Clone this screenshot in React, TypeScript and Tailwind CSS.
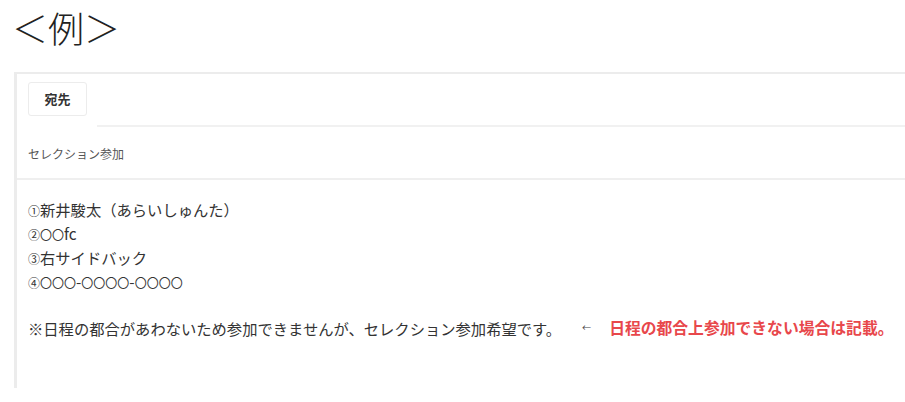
export default function App() {
  return (
    <div className="w-[905px] h-[402px] bg-white overflow-hidden text-[#333] font-['Noto_Sans_CJK_JP',sans-serif]">
      <h1 className="pl-[12px] pt-[7px] text-[36px] leading-[40px] font-light text-[#222]">＜例＞</h1>

      <div className="mt-[25px] ml-[14px] h-[316px] border-l-[3px] border-t-2 border-[#ececec]">
        <div className="flex pl-[11px] pt-[8px]">
          <div className="w-[59px] h-[34px] flex items-center justify-center rounded-[3px] border border-[#ececec] text-[13px] font-bold text-[#333]">
            宛先
          </div>
          <div className="flex-1 ml-[10px] h-[45px] border-b-2 border-[#f1f1f1]" />
        </div>

        <div className="h-[53px] border-b-2 border-[#efefef] pl-[11px] flex items-center text-[12px] text-[#555] pt-[2px]">
          セレクション参加
        </div>

        <div className="pl-[11px] pt-[17px] text-[15.3px] leading-[24px] text-[#333]">
          <p><span className="text-[12px] leading-none">①</span>新井駿太（あらいしゅんた）</p>
          <p><span className="text-[12px] leading-none">②〇〇</span>fc</p>
          <p><span className="text-[12px] leading-none">③</span>右サイドバック</p>
          <p>
            <span className="text-[12px] leading-none">④〇〇〇</span>-<span className="text-[12px] leading-none">〇〇〇〇</span>-
            <span className="text-[12px] leading-none">〇〇〇〇</span>
          </p>
          <p className="mt-[23px] flex items-center whitespace-nowrap">
            <span>※日程の都合があわないため参加できませんが、セレクション参加希望です。</span>
            <span className="ml-[21px] text-[9px] text-[#444]">←</span>
            <span className="ml-[18px] text-[15.8px] font-bold text-[#e8474b]">日程の都合上参加できない場合は記載。</span>
          </p>
        </div>
      </div>
    </div>
  );
}
